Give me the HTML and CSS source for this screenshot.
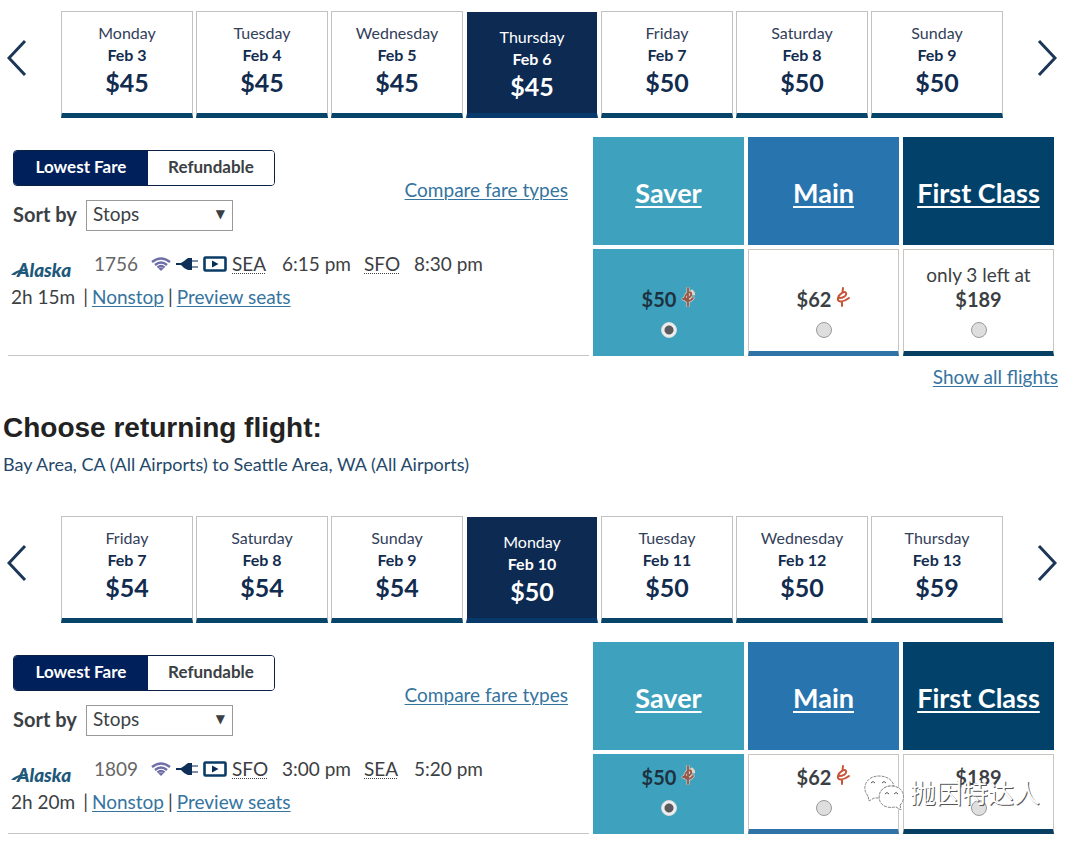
FILE: index.html
```html
<!DOCTYPE html>
<html lang="en">
<head>
<meta charset="utf-8">
<title>Choose flights</title>
<link rel="stylesheet" href="styles.css">
</head>
<body>
<svg class="defs" aria-hidden="true">
  <symbol id="prev" viewBox="0 0 20 38"><path d="M18 2 2 19 18 36" fill="none" stroke="#1b3657" stroke-width="3"/></symbol>
  <symbol id="next" viewBox="0 0 20 38"><path d="M2 2 18 19 2 36" fill="none" stroke="#1b3657" stroke-width="3"/></symbol>
  <symbol id="logo" viewBox="0 0 64 24">
    <path d="M0 17C5 12 10 11 17 11L16 13C11 13 7 14 4 17Z" fill="#1d587a"/>
    <text x="6" y="19" class="logo-text">Alaska</text>
  </symbol>
  <symbol id="wifi" viewBox="0 0 20 14">
    <g fill="none" stroke="#6e6ea8" stroke-width="2.400"><path d="M1 5Q10-2 19 5"/><path d="M4 8Q10 3 16 8"/><path d="M6.500 10.500Q10 7.500 13.500 10.500"/></g>
    <path d="M7.500 11.500Q10 9.500 12.500 11.500L10 14Z" fill="#6e6ea8"/>
  </symbol>
  <symbol id="plug" viewBox="0 0 24 14">
    <path d="M1 6H6C8 5 10 3 13 1H17V13H13C10 12 8 10 6 8H1Z" fill="#0d2f58"/>
    <path d="M17 3H23V5H17ZM17 9H23V11H17Z" fill="#7d8ea6"/>
  </symbol>
  <symbol id="video" viewBox="0 0 24 16">
    <rect x="1.500" y="1.500" width="21" height="13" rx="1" fill="#fff" stroke="#0b3c66" stroke-width="2.600"/>
    <path d="M9 4.500 15.500 8 9 11.500Z" fill="#0b2c54"/>
  </symbol>
  <symbol id="saver-e" viewBox="0 0 14 20">
    <g fill="none" stroke-linecap="round"><path d="M7 1V19M2 12C8 12 11 9 10 6C9 4 4 7 4 11C4 15 9 15 12 11M11 4 13 7" stroke="#e4d3c6" stroke-width="3"/>
    <path d="M7 1V19M2 12C8 12 11 9 10 6C9 4 4 7 4 11C4 15 9 15 12 11" stroke="#94584a" stroke-width="1.800"/></g>
  </symbol>
  <symbol id="main-e" viewBox="0 0 14 20">
    <path d="M7 1 6.500 5M6 15 6 19M3 11C7 11 11 9 10 6C9 3 3 7 2 11C1 16 8 15 13 11" fill="none" stroke="#c8553a" stroke-width="2" stroke-linecap="round"/>
  </symbol>
</svg>

<main class="page">
  <section class="trip">
    <nav class="dates" aria-label="Departure dates">
      <button class="arrow" aria-label="Earlier dates"><svg><use href="#prev"/></svg></button>
      <button class="date"><span>Monday</span><b>Feb 3</b><strong>$45</strong></button>
      <button class="date"><span>Tuesday</span><b>Feb 4</b><strong>$45</strong></button>
      <button class="date"><span>Wednesday</span><b>Feb 5</b><strong>$45</strong></button>
      <button class="date selected"><span>Thursday</span><b>Feb 6</b><strong>$45</strong></button>
      <button class="date"><span>Friday</span><b>Feb 7</b><strong>$50</strong></button>
      <button class="date"><span>Saturday</span><b>Feb 8</b><strong>$50</strong></button>
      <button class="date"><span>Sunday</span><b>Feb 9</b><strong>$50</strong></button>
      <button class="arrow" aria-label="Later dates"><svg><use href="#next"/></svg></button>
    </nav>
    <div class="fares">
      <div class="tools">
        <div class="filters">
          <div class="toggle"><button class="on">Lowest Fare</button><button>Refundable</button></div>
          <div class="sort"><label for="sort-out">Sort by</label><span class="select"><select id="sort-out"><option>Stops</option></select></span></div>
        </div>
        <a href="#" class="compare">Compare fare types</a>
      </div>
      <a href="#" class="head saver">Saver</a>
      <a href="#" class="head main">Main</a>
      <a href="#" class="head first">First Class</a>
      <div class="flight">
        <div class="times">
          <svg class="logo" role="img" aria-label="Airline"><use href="#logo"/></svg>
          <span class="number">1756</span>
          <span class="perks"><svg class="wifi"><use href="#wifi"/></svg><svg class="plug"><use href="#plug"/></svg><svg class="video"><use href="#video"/></svg></span>
          <abbr title="Seattle">SEA</abbr><span>6:15 pm</span><abbr title="San Francisco">SFO</abbr><span>8:30 pm</span>
        </div>
        <div class="details"><span class="duration">2h 15m</span><span>|</span><a href="#">Nonstop</a><span>|</span><a href="#">Preview seats</a></div>
      </div>
      <label class="fare saver"><span class="price">$50 <svg><use href="#saver-e"/></svg></span><input type="radio" name="out" checked></label>
      <label class="fare main"><span class="price">$62 <svg><use href="#main-e"/></svg></span><input type="radio" name="out"></label>
      <label class="fare first"><span class="left">only 3 left at</span><span class="price">$189</span><input type="radio" name="out"></label>
    </div>
    <p class="all"><a href="#">Show all flights</a></p>
  </section>

  <header class="intro">
    <h2>Choose returning flight:</h2>
    <p>Bay Area, CA (All Airports) to Seattle Area, WA (All Airports)</p>
  </header>

  <section class="trip compact">
    <nav class="dates" aria-label="Return dates">
      <button class="arrow" aria-label="Earlier dates"><svg><use href="#prev"/></svg></button>
      <button class="date"><span>Friday</span><b>Feb 7</b><strong>$54</strong></button>
      <button class="date"><span>Saturday</span><b>Feb 8</b><strong>$54</strong></button>
      <button class="date"><span>Sunday</span><b>Feb 9</b><strong>$54</strong></button>
      <button class="date selected"><span>Monday</span><b>Feb 10</b><strong>$50</strong></button>
      <button class="date"><span>Tuesday</span><b>Feb 11</b><strong>$50</strong></button>
      <button class="date"><span>Wednesday</span><b>Feb 12</b><strong>$50</strong></button>
      <button class="date"><span>Thursday</span><b>Feb 13</b><strong>$59</strong></button>
      <button class="arrow" aria-label="Later dates"><svg><use href="#next"/></svg></button>
    </nav>
    <div class="fares">
      <div class="tools">
        <div class="filters">
          <div class="toggle"><button class="on">Lowest Fare</button><button>Refundable</button></div>
          <div class="sort"><label for="sort-back">Sort by</label><span class="select"><select id="sort-back"><option>Stops</option></select></span></div>
        </div>
        <a href="#" class="compare">Compare fare types</a>
      </div>
      <a href="#" class="head saver">Saver</a>
      <a href="#" class="head main">Main</a>
      <a href="#" class="head first">First Class</a>
      <div class="flight">
        <div class="times">
          <svg class="logo" role="img" aria-label="Airline"><use href="#logo"/></svg>
          <span class="number">1809</span>
          <span class="perks"><svg class="wifi"><use href="#wifi"/></svg><svg class="plug"><use href="#plug"/></svg><svg class="video"><use href="#video"/></svg></span>
          <abbr title="San Francisco">SFO</abbr><span>3:00 pm</span><abbr title="Seattle">SEA</abbr><span>5:20 pm</span>
        </div>
        <div class="details"><span class="duration">2h 20m</span><span>|</span><a href="#">Nonstop</a><span>|</span><a href="#">Preview seats</a></div>
      </div>
      <label class="fare saver"><span class="price">$50 <svg><use href="#saver-e"/></svg></span><input type="radio" name="back" checked></label>
      <label class="fare main"><span class="price">$62 <svg><use href="#main-e"/></svg></span><input type="radio" name="back"></label>
      <label class="fare first"><span class="price">$189</span><input type="radio" name="back"></label>
    </div>
    <div class="watermark">
      <svg viewBox="0 0 42 36" aria-hidden="true">
        <g fill="#fff" stroke="#888" stroke-width="1" stroke-dasharray="3 1">
          <path d="M5 22C-2 14 3 2 16 2C25 2 30 7 31 12C22 11 15 17 17 24L11 24L6 27Z"/>
          <path d="M37 31C43 26 42 12 28 12C14 12 12 30 24 33C28 34 31 33 33 33L38 36Z"/>
        </g>
        <g fill="none" stroke="#555"><path d="M8 9Q10 6 12 9M19 9Q21 6 23 9M22 20Q24 17 26 20M31 20Q33 17 35 20"/></g>
      </svg>
      <span lang="zh">抛因特达人</span>
    </div>
  </section>
</main>
</body>
</html>
```

FILE: styles.css
```css
* { box-sizing: border-box; }
body { margin: 0; background: #fff; color: #3c3f44; font: 19px/24px Lato, sans-serif; }
button, select { font: inherit; color: inherit; cursor: pointer; }
a { color: #35749f; text-decoration: underline; text-decoration-thickness: 1px; text-underline-offset: 2px; }
p, h2 { margin: 0; }
.defs { position: absolute; width: 0; height: 0; }
.page { padding-top: 11px; }
.trip { position: relative; }

.dates { display: grid; grid-template-columns: 58px repeat(7, 1fr) 69px; gap: 3px; }
.arrow { border: 0; padding: 0; background: none; display: flex; align-items: center; }
.arrow:first-child { padding-left: 7px; }
.arrow:last-child { padding-left: 31px; }
.arrow svg { width: 20px; height: 38px; margin-bottom: 13px; }
.date { display: flex; flex-direction: column; align-items: center; height: 107px; padding: 10px 0 0; border: 1px solid #bfc3c5; border-bottom: 5px solid #07446a; background: #fff; color: #122c50; font-size: 16px; line-height: 22px; }
.date span { color: #33405a; }
.date strong { font-size: 25px; line-height: 32px; }
.date.selected { padding-top: 14px; border-color: #fff #fff #07396a; background: #0c2a52; background-clip: padding-box; color: #fff; }
.date.selected span { color: #fff; }

.fares { display: grid; grid-template-columns: 1fr repeat(3, 151px); gap: 4px; padding: 19px 21px 0 8px; }
.tools { display: flex; justify-content: space-between; padding: 13px 21px 0 5px; }
.toggle { display: flex; width: 262px; height: 36px; border: 1px solid #0a2045; border-radius: 4px; overflow: hidden; }
.toggle button { flex: 1; border: 0; padding: 0 0 2px; background: #fff; font-size: 17px; font-weight: 700; }
.toggle .on { flex: 0 0 134px; background: #00205c; color: #fff; }
.sort { display: flex; margin-top: 14px; }
.sort label { width: 73px; font-size: 20px; line-height: 28px; font-weight: 700; }
.select { position: relative; width: 147px; height: 31px; }
.select::after { content: "▼"; position: absolute; right: 8px; top: 2px; font: 12px/24px "DejaVu Sans", sans-serif; pointer-events: none; }
.select select { appearance: none; width: 100%; height: 100%; padding: 0 6px 4px; border: 1px solid #999; border-radius: 0; background: #fff; }
.compare { margin-top: 28px; }
.head { display: flex; align-items: center; justify-content: center; height: 108px; padding-top: 4px; color: #fff; font-size: 27px; font-weight: 700; text-decoration-thickness: 2px; text-underline-offset: 3px; }
.head.saver { background: #3ea1bd; }
.head.main { background: #2774ae; }
.head.first { background: #02426a; }

.flight { padding: 3px 3px 0; border-bottom: 1px solid #c4c6c8; }
.times { display: grid; grid-template-columns: 83px 57px 81px 50px 82px 50px auto; grid-template-rows: 24px; align-items: center; height: 24px; }
.logo { width: 64px; height: 24px; align-self: start; margin-top: 6px; overflow: visible; }
.logo-text { font: italic 900 19px Lato, sans-serif; fill: #1d587a; }
.number { color: #666; }
.perks { display: flex; align-items: center; gap: 4px; }
.wifi { width: 20px; height: 14px; }
.plug { width: 24px; height: 14px; }
.video { width: 24px; height: 16px; }
abbr { text-decoration: underline dotted 1px; text-underline-offset: 2px; }
.details { display: flex; gap: 4px; margin-top: 9px; }
.duration { margin-right: 4px; }
.fare { display: flex; flex-direction: column; align-items: center; justify-content: flex-end; padding: 13px 0; border: 1px solid #c9c5c0; border-bottom: 5px solid; cursor: pointer; }
.compact .fare { padding-top: 10px; }
.fare.saver { background: #3ea1bd; border-color: #3ea1bd; color: #1d3140; }
.fare.main { border-bottom-color: #2f73a7; }
.fare.first { border-bottom-color: #063f61; }
.price { display: flex; align-items: center; gap: 5px; font-size: 20px; font-weight: 700; }
.price svg { width: 14px; height: 20px; margin-bottom: 4px; }
.fare input { appearance: none; width: 16px; height: 16px; margin: 11px 0 0; border: 1px solid #999; border-radius: 50%; background: #dedede; }
.fare input:checked { border-color: #ddd; background: radial-gradient(circle, #5b5b5f 0 4px, #eee 5px); }
.all { padding: 9px 17px 1px 0; text-align: right; }

.intro { padding: 22px 3px 40px; }
.intro h2 { color: #222; font: 700 28px/32px "Liberation Sans", Arial, sans-serif; }
.intro p { margin-top: 8px; color: #24486a; font-size: 18px; }

.watermark { position: absolute; right: 35px; bottom: 24px; display: flex; align-items: center; gap: 5px; color: #fff; font: 26px/36px "Noto Sans CJK SC", sans-serif; text-shadow: 1px 1px 0 #555; pointer-events: none; }
.watermark svg { width: 42px; height: 36px; }
```
